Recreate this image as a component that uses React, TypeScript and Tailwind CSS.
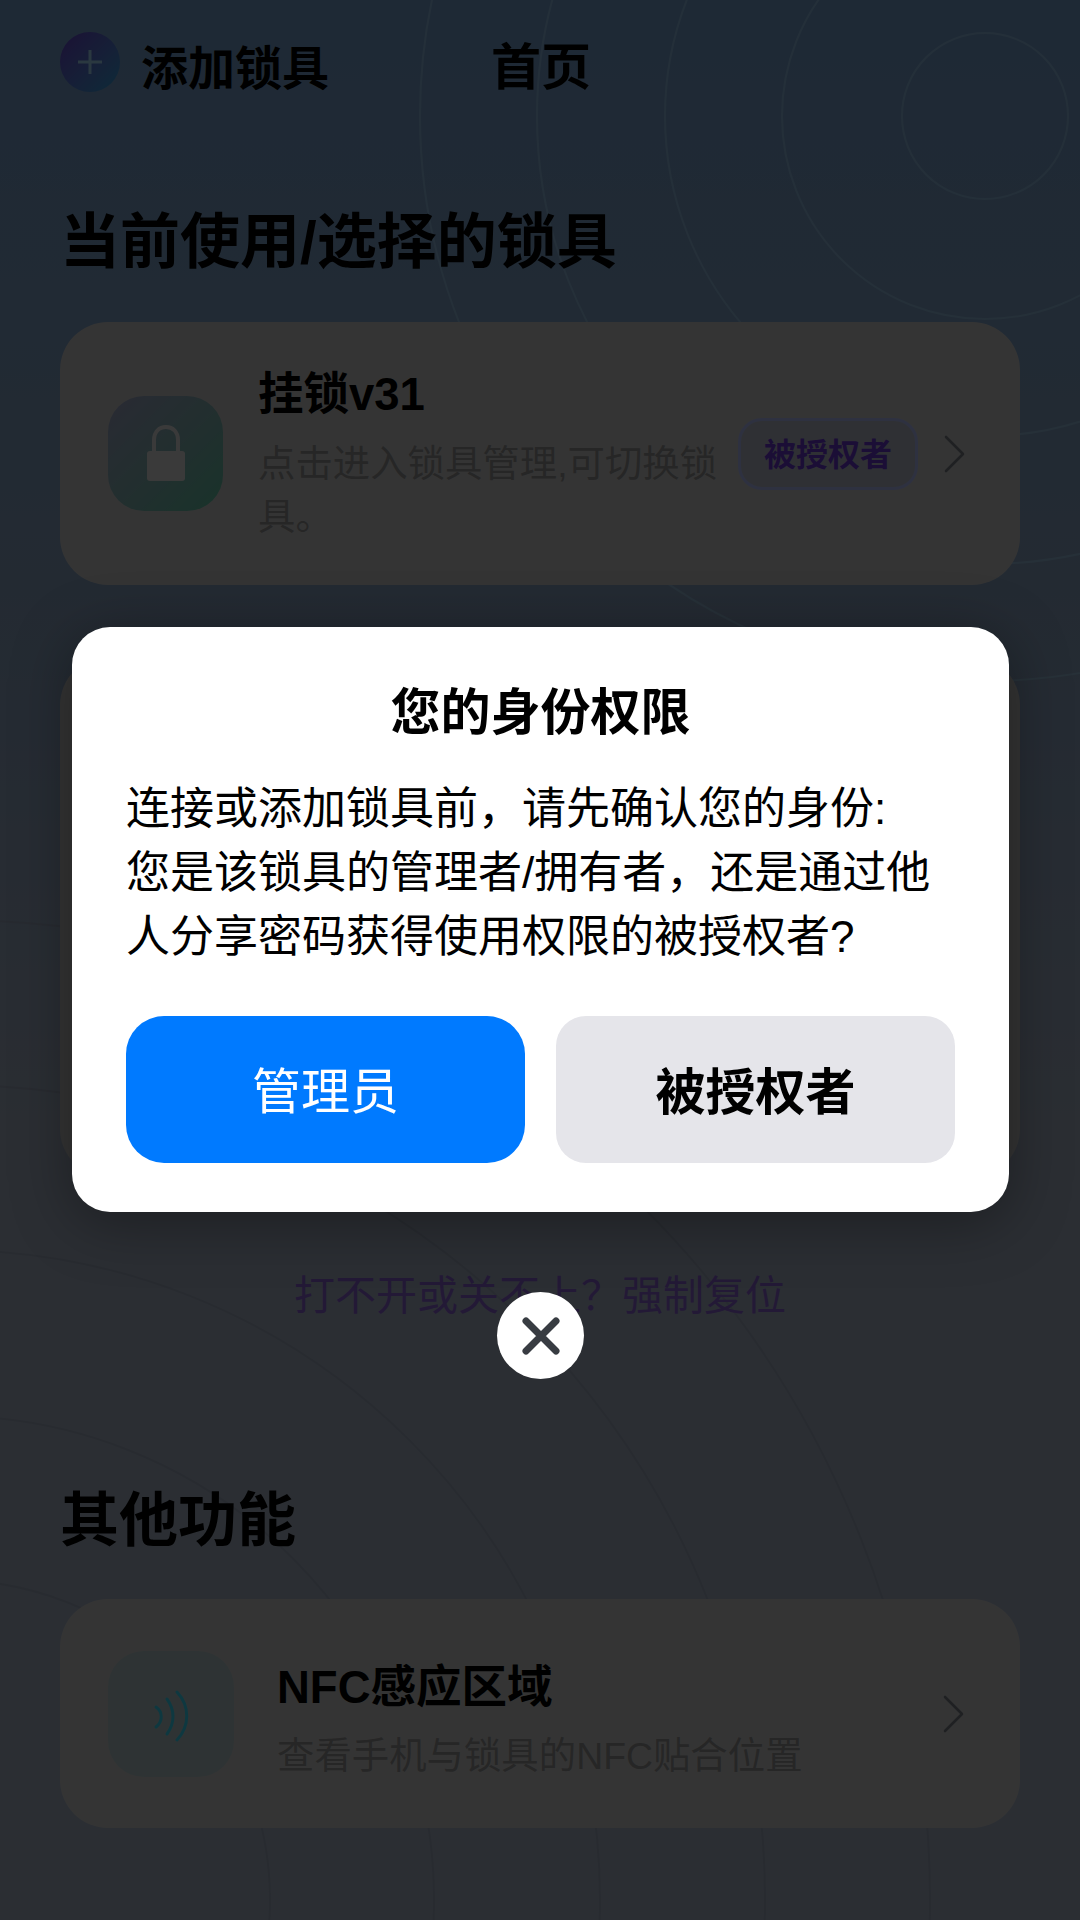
const FONT = "font-['Liberation_Sans','Noto_Sans_CJK_SC',sans-serif]";

function Chevron() {
  return (
    <svg width="22" height="38" viewBox="0 0 22 38" fill="none" className="shrink-0">
      <path d="M2 2 L19 19 L2 36" stroke="#7c8088" strokeWidth="2.6" strokeLinecap="round" strokeLinejoin="round" />
    </svg>
  );
}

function Ripples() {
  const top = [83, 203, 320, 448, 565];
  const bottom = [320, 484, 650, 815, 980];
  return (
    <svg className="absolute inset-0" width="1080" height="1920" viewBox="0 0 1080 1920" fill="none">
      {top.map((r) => (
        <circle key={r} cx="985" cy="116" r={r} stroke="#a8dcf8" strokeOpacity="0.45" strokeWidth="2" />
      ))}
      {bottom.map((r) => (
        <circle key={r} cx="-50" cy="1900" r={r} stroke="#98a4b8" strokeOpacity="0.6" strokeWidth="2" />
      ))}
    </svg>
  );
}

export default function App() {
  return (
    <div className={`relative w-[1080px] h-[1920px] overflow-hidden bg-gradient-to-b from-[#78a4d4] via-[#8ca8c8] via-30% to-[#acb8cc] to-60% ${FONT}`}>
      <Ripples />
      <div className="relative flex flex-col px-[60px]">
        <div className="flex items-center h-[62px] mt-[31px]">
          <div className="flex items-center justify-center w-[60px] h-[60px] rounded-full bg-gradient-to-br from-[#6840d0] to-[#28a8e0]">
            <svg width="30" height="30" viewBox="0 0 30 30" fill="none">
              <path d="M15 3 V27 M3 15 H27" stroke="#a8e0ff" strokeWidth="3" />
            </svg>
          </div>
          <span className="ml-[21px] mt-[12px] text-[47px] font-bold text-black leading-none">添加锁具</span>
          <span className="ml-[162px] mt-[12px] text-[50px] font-bold text-black leading-none">首页</span>
        </div>

        <h2 className="mt-[120px] text-[60px] font-bold text-black leading-none">当前使用/选择的锁具</h2>

        <div className="mt-[49px] flex items-center w-[960px] h-[263px] rounded-[48px] bg-[#d0d0d0] pl-[48px] pr-[55px]">
          <div className="flex items-center justify-center shrink-0 w-[115px] h-[115px] rounded-[36px] bg-gradient-to-br from-[#a4a8cc] to-[#60c8a8]">
            <svg width="40" height="58" viewBox="0 0 40 58" fill="none">
              <path d="M8 28 V15 C8 7 13 2 20 2 C27 2 32 7 32 15 V28" stroke="#e8e8e8" strokeWidth="4" />
              <rect x="1" y="26" width="38" height="30" rx="3" fill="#e8e8e8" />
            </svg>
          </div>
          <div className="ml-[35px] pt-[3px] w-[470px] shrink-0">
            <div className="text-[45.5px] font-bold text-black leading-[56px]">挂锁v31</div>
            <div className="mt-[15px] text-[37.4px] text-[#989898] leading-[53px]">点击进入锁具管理,可切换锁具。</div>
          </div>
          <div className="ml-[10px] pt-[3px] flex items-center justify-center shrink-0 w-[180px] h-[72px] rounded-[24px] bg-[#bcc0d0] border-[3px] border-[#b8c4ff] text-[32px] font-bold text-[#6c38d8]">
            被授权者
          </div>
          <div className="ml-[26px]">
            <Chevron />
          </div>
        </div>

        <div className="mt-[72px] w-[960px] h-[520px] rounded-[48px] bg-[#d0d0d0]" />

        <div className="mt-[91px] text-center text-[41px] leading-[56px] text-[#8c64d8] w-[960px]">打不开或关不上？强制复位</div>

        <h2 className="mt-[167px] text-[59px] leading-[60px] font-bold text-black">其他功能</h2>

        <div className="mt-[48px] flex items-center w-[960px] h-[229px] rounded-[48px] bg-[#d0d0d0] pl-[48px] pr-[55px]">
          <div className="flex items-center justify-center shrink-0 w-[126px] h-[126px] rounded-[36px] bg-[#b8ccd0]">
            <svg width="40" height="56" viewBox="0 0 40 56" fill="none">
              <path d="M5 21 C12 26 12 35 5 41" stroke="#38e0ff" strokeWidth="3" strokeLinecap="round" />
              <path d="M16 13 C24 24 24 37 16 48" stroke="#38e0ff" strokeWidth="3" strokeLinecap="round" />
              <path d="M26 6 C39 20 39 40 26 54" stroke="#38e0ff" strokeWidth="3" strokeLinecap="round" />
            </svg>
          </div>
          <div className="ml-[43px] pt-[16px] flex-1">
            <div className="text-[45.5px] font-bold text-black leading-[56px]">NFC感应区域</div>
            <div className="mt-[14px] text-[37.4px] text-[#989898] leading-[53px]">查看手机与锁具的NFC贴合位置</div>
          </div>
          <Chevron />
        </div>
      </div>

      <div className="absolute inset-0 bg-black/75" />

      <div className="absolute left-[72px] top-[627px] w-[937px] h-[585px] rounded-[38px] bg-white shadow-[0_10px_60px_rgba(0,0,0,0.35)] px-[54px] flex flex-col">
        <div className="mt-[56px] text-center text-[50px] font-bold text-black leading-[60px]">您的身份权限</div>
        <div className="mt-[34px] text-[44px] leading-[64px] text-black">
          连接或添加锁具前，请先确认您的身份:
          <br />
          您是该锁具的管理者/拥有者，还是通过他
          <br />
          人分享密码获得使用权限的被授权者?
        </div>
        <div className="mt-[47px] flex gap-[31px]">
          <button className="w-[399px] h-[147px] pt-[6px] rounded-[38px] bg-[#007aff] text-white text-[49px] leading-none">管理员</button>
          <button className="w-[399px] h-[147px] pt-[6px] rounded-[30px] bg-[#e5e5ea] text-black text-[50px] font-bold leading-none">被授权者</button>
        </div>
      </div>

      <div className="absolute left-[497px] top-[1292px] w-[87px] h-[87px] rounded-full bg-white flex items-center justify-center">
        <svg width="44" height="44" viewBox="0 0 44 44" fill="none">
          <path d="M7 7 L37 37 M37 7 L7 37" stroke="#383c42" strokeWidth="7" strokeLinecap="round" />
        </svg>
      </div>
    </div>
  );
}
